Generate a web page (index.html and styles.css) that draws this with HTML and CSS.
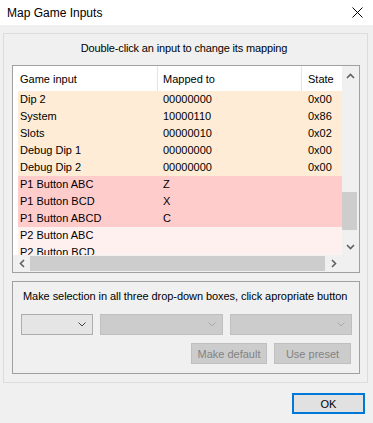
FILE: index.html
```html
<!DOCTYPE html>
<html>
<head>
<meta charset="utf-8">
<link rel="stylesheet" href="styles.css">
</head>
<body>
<div class="titlebar">
  <span class="title">Map Game Inputs</span>
  <svg class="close" width="11" height="11" viewBox="0 0 11 11"><path d="M0.5 0.5 L10.5 10.5 M10.5 0.5 L0.5 10.5" stroke="#000" stroke-width="1" fill="none"/></svg>
</div>
<div class="client">
  <div class="frame">
    <div class="caption">Double-click an input to change its mapping</div>
    <div class="listbox">
      <div class="lv-top">
        <div class="listview">
          <div class="lv-header">
            <div class="hcell c1">Game input</div>
            <div class="hcell c2">Mapped to</div>
            <div class="hcell c3">State</div>
          </div>
          <div class="row dip"><span class="c1">Dip 2</span><span class="c2">00000000</span><span class="c3">0x00</span></div>
          <div class="row dip"><span class="c1">System</span><span class="c2">10000110</span><span class="c3">0x86</span></div>
          <div class="row dip"><span class="c1">Slots</span><span class="c2">00000010</span><span class="c3">0x02</span></div>
          <div class="row dip"><span class="c1">Debug Dip 1</span><span class="c2">00000000</span><span class="c3">0x00</span></div>
          <div class="row dip"><span class="c1">Debug Dip 2</span><span class="c2">00000000</span><span class="c3">0x00</span></div>
          <div class="row p1"><span class="c1">P1 Button ABC</span><span class="c2">Z</span><span class="c3"></span></div>
          <div class="row p1"><span class="c1">P1 Button BCD</span><span class="c2">X</span><span class="c3"></span></div>
          <div class="row p1"><span class="c1">P1 Button ABCD</span><span class="c2">C</span><span class="c3"></span></div>
          <div class="row p2"><span class="c1">P2 Button ABC</span><span class="c2"></span><span class="c3"></span></div>
          <div class="row p2"><span class="c1">P2 Button BCD</span><span class="c2"></span><span class="c3"></span></div>
        </div>
        <div class="vscroll">
          <div class="sbtn sbtn-up"><svg width="9" height="6" viewBox="0 0 9 6"><path d="M1 5 L4.5 1.5 L8 5" stroke="#606060" stroke-width="1.6" fill="none"/></svg></div>
          <div class="vgap-top"></div>
          <div class="vthumb"></div>
          <div class="vgap-bottom"></div>
          <div class="sbtn"><svg width="9" height="6" viewBox="0 0 9 6"><path d="M1 1 L4.5 4.5 L8 1" stroke="#606060" stroke-width="1.6" fill="none"/></svg></div>
        </div>
      </div>
      <div class="hbar">
        <div class="hscroll">
          <div class="sbtn"><svg width="6" height="9" viewBox="0 0 6 9"><path d="M5 1 L1.5 4.5 L5 8" stroke="#606060" stroke-width="1.6" fill="none"/></svg></div>
          <div class="hthumb"></div>
          <div class="sbtn"><svg width="6" height="9" viewBox="0 0 6 9"><path d="M1 1 L4.5 4.5 L1 8" stroke="#606060" stroke-width="1.6" fill="none"/></svg></div>
        </div>
        <div class="corner"></div>
      </div>
    </div>
    <div class="group">
      <div class="group-text">Make selection in all three drop-down boxes, click apropriate button</div>
      <div class="combos">
        <div class="combo combo-a"><svg width="8" height="5" viewBox="0 0 8 5"><path d="M0.5 0.5 L4 4 L7.5 0.5" stroke="#444" stroke-width="1" fill="none"/></svg></div>
        <div class="combo combo-b disabled"><svg width="8" height="5" viewBox="0 0 8 5"><path d="M0.5 0.5 L4 4 L7.5 0.5" stroke="#a8a8a8" stroke-width="1" fill="none"/></svg></div>
        <div class="combo combo-c disabled"><svg width="8" height="5" viewBox="0 0 8 5"><path d="M0.5 0.5 L4 4 L7.5 0.5" stroke="#a8a8a8" stroke-width="1" fill="none"/></svg></div>
      </div>
      <div class="buttons">
        <div class="btn btn-default">Make default</div>
        <div class="btn btn-preset">Use preset</div>
      </div>
    </div>
  </div>
  <div class="footer">
    <div class="ok">OK</div>
  </div>
</div>
</body>
</html>
```
FILE: styles.css
```css
* { box-sizing: border-box; }
body {
  margin: 0;
  width: 373px;
  height: 423px;
  overflow: hidden;
  background: #f0f0f0;
  font-family: "Liberation Sans", Arial, sans-serif;
  font-size: 11px;
  color: #000;
}
.titlebar {
  height: 25px;
  background: #fff;
  display: flex;
  align-items: center;
  justify-content: space-between;
  padding: 0 10px 0 7px;
}
.title { font-size: 12px; }
.close { display: block; }
.client { padding: 8px 6px 0 3px; }
.frame {
  width: 365px;
  height: 350px;
  border: 1px solid #dcdcdc;
  padding: 8px 7px 0 8px;
}
.caption {
  text-align: center;
  line-height: 13px;
  height: 13px;
  margin-bottom: 10px;
  letter-spacing: -0.15px;
  padding-right: 4px;
}
.listbox {
  width: 348px;
  height: 208px;
  border: 1px solid #a0a0a0;
  background: #fff;
}
.lv-top { display: flex; height: 189px; }
.listview {
  width: 329px;
  height: 189px;
  padding-left: 5px;
  overflow: hidden;
  background: #fff;
}
.lv-header, .row {
  display: grid;
  grid-template-columns: 140px 144px 1fr;
}
.lv-header { height: 25px; }
.hcell {
  display: flex;
  align-items: center;
  height: 25px;
}
.hcell.c1, .hcell.c2 { border-right: 1px solid #e5e5e5; }
.row { height: 17px; line-height: 17px; white-space: nowrap; }
.c1 { padding-left: 2px; }
.c2 { padding-left: 5px; }
.c3 { padding-left: 6px; }
.dip { background: #feecd6; }
.p1 { background: #ffcccc; }
.p2 { background: #fff0f0; }
.vscroll {
  width: 17px;
  height: 189px;
  display: flex;
  flex-direction: column;
  background: #f0f0f0;
}
.sbtn {
  width: 17px;
  height: 17px;
  flex: none;
  display: flex;
  align-items: center;
  justify-content: center;
}
.sbtn svg { display: block; }
.sbtn-up { height: 19px; }
.vgap-top { height: 107px; flex: none; }
.vthumb { height: 38px; flex: none; margin: 0 2px 0 0; background: #cdcdcd; }
.vgap-bottom { flex: 1; }
.hbar { display: flex; height: 17px; }
.hscroll {
  width: 329px;
  display: flex;
  background: #f0f0f0;
}
.hthumb { flex: 1; margin: 1px 0 1px 0; background: #cdcdcd; }
.corner { width: 17px; background: #f0f0f0; }
.group {
  margin-top: 8px;
  width: 348px;
  height: 93px;
  border: 1px solid #a0a0a0;
  padding: 8px 7px 0 8px;
}
.group-text {
  line-height: 13px;
  height: 13px;
  margin-left: 2px;
  white-space: nowrap;
  letter-spacing: -0.06px;
}
.combos {
  display: flex;
  gap: 7px;
  margin-top: 11px;
}
.combo {
  height: 21px;
  display: flex;
  align-items: center;
  justify-content: flex-end;
  padding-right: 6px;
  background: #e5e5e5;
  border: 1px solid #adadad;
}
.combo svg { display: block; }
.combo.disabled { background: #cccccc; border-color: #bfbfbf; }
.combo-a { width: 72px; }
.combo-b { width: 123px; }
.combo-c { width: 122px; }
.buttons {
  display: flex;
  justify-content: flex-end;
  gap: 7px;
  margin-top: 8px;
  padding-right: 1px;
}
.btn {
  height: 21px;
  display: flex;
  align-items: center;
  justify-content: center;
  background: #cccccc;
  border: 1px solid #bfbfbf;
  color: #838383;
}
.btn-default { width: 76px; }
.btn-preset { width: 77px; }
.footer {
  display: flex;
  justify-content: flex-end;
  padding-right: 2px;
  margin-top: 10px;
}
.ok {
  width: 73px;
  height: 21px;
  border: 2px solid #0078d7;
  background: #e1e1e1;
  display: flex;
  align-items: center;
  justify-content: center;
}
```
